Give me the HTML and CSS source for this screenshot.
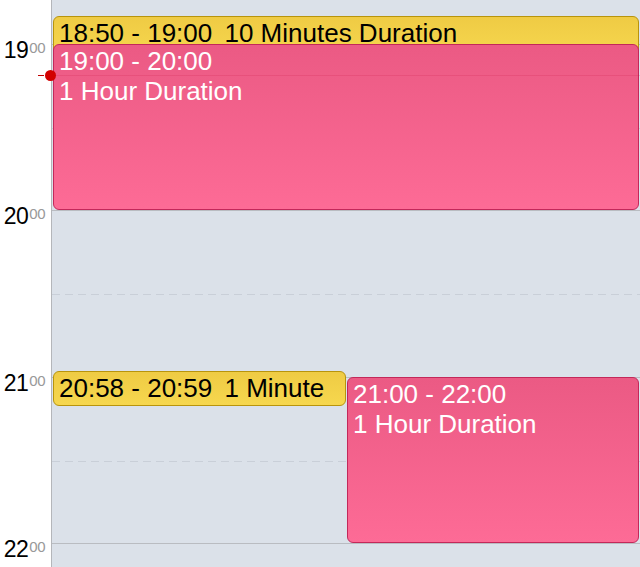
FILE: index.html
```html
<!DOCTYPE html>
<html lang="en">
<head>
  <meta charset="UTF-8" />
  <meta name="viewport" content="width=device-width, initial-scale=1.0" />
  <title>Day View</title>
  <link rel="stylesheet" href="styles.css">
</head>
<body>
  <div class="calendar">
    <div class="gutter">
      <div class="hour"></div>
      <div class="hour"><span class="label">19<sup>00</sup></span></div>
      <div class="hour"><span class="label">20<sup>00</sup></span></div>
      <div class="hour"><span class="label">21<sup>00</sup></span></div>
      <div class="hour"><span class="label">22<sup>00</sup></span></div>
    </div>

    <div class="day">
      <div class="slot"></div>
      <div class="slot"></div>
      <div class="slot"></div>
      <div class="slot"></div>
      <div class="slot"></div>

      <div class="event yellow full" style="top:138.75px;height:40px;">
        <span class="time">18:50 - 19:00</span> 10 Minutes Duration
      </div>
      <div class="event pink full" style="top:166.5px;height:166.5px;">
        <div>19:00 - 20:00</div>
        <div>1 Hour Duration</div>
      </div>
      <div class="event yellow left" style="top:494px;height:35px;">
        <span class="time">20:58 - 20:59</span> 1 Minute
      </div>
      <div class="event pink right" style="top:499.5px;height:166.5px;">
        <div>21:00 - 22:00</div>
        <div>1 Hour Duration</div>
      </div>
    </div>

    <!-- current time 19:11 -->
    <div class="now" style="top:198px;"></div>
  </div>
</body>
</html>
```

FILE: styles.css
```css
body {
  margin: 0;
  background: #fff;
  font-family: 'Liberation Sans', Arial, sans-serif;
  overflow: hidden;
}
.calendar {
  display: flex;
  position: relative;
  margin-top: -123px;
}
.gutter {
  width: 51px;
  border-right: 1px solid #b4b6ba;
  background: #fff;
}
.hour {
  height: 166.5px;
  text-align: right;
  padding-right: 6px;
}
.label {
  display: inline-block;
  margin-top: -10px;
  font-size: 23px;
  line-height: 23px;
  color: #000;
  letter-spacing: -0.5px;
}
.label sup {
  font-size: 15px;
  color: #999;
  vertical-align: top;
  line-height: 15px;
  margin-left: 1px;
  position: relative;
  top: 1px;
  letter-spacing: -0.5px;
}
.day {
  flex: 1;
  position: relative;
  background: #dbe1e9;
}
.slot {
  height: 166.5px;
  box-sizing: border-box;
  border-top: 1px solid #b9bcc1;
  position: relative;
}
.slot::after {
  content: "";
  position: absolute;
  left: 0;
  right: 0;
  top: 83px;
  height: 1px;
  background: repeating-linear-gradient(90deg, #c9cfd8 0 8px, transparent 8px 13px);
}
.event {
  position: absolute;
  box-sizing: border-box;
  border-radius: 6px;
  padding: 1px 6px 1px 5px;
  font-size: 26px;
  line-height: 30px;
  white-space: nowrap;
  overflow: hidden;
}
.event .time {
  margin-right: 5px;
}
.full {
  left: 1px;
  width: calc(100% - 2px);
}
.left {
  left: 1px;
  width: calc(50% - 1px);
}
.right {
  left: calc(50% + 1px);
  width: calc(50% - 2px);
}
.yellow {
  background: linear-gradient(#efcb44, #f6d74e);
  border: 1px solid #b8940c;
  color: #000;
}
.pink {
  background: linear-gradient(#eb5a84, #fd6b96);
  border: 1px solid #c3285a;
  color: #fff;
}
.now {
  position: absolute;
  left: 52px;
  right: 0;
  height: 1px;
  background: rgba(200, 20, 70, 0.18);
}
.now::before {
  content: "";
  position: absolute;
  left: -7px;
  top: -5px;
  width: 11px;
  height: 11px;
  border-radius: 50%;
  background: #d20000;
}
.now::after {
  content: "";
  position: absolute;
  left: -14px;
  top: 0;
  width: 6px;
  height: 1px;
  background: #c00000;
}
```
